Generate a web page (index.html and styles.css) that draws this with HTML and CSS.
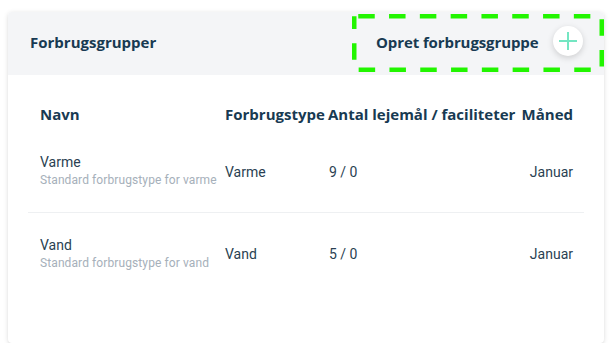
FILE: index.html
```html
<!DOCTYPE html>
<html lang="da">
<head>
<meta charset="utf-8">
<title>Forbrugsgrupper</title>
<link rel="stylesheet" href="styles.css">
</head>
<body>
<div class="card">
  <div class="card-header">
    <h2 class="title">Forbrugsgrupper</h2>
    <button class="create-btn" type="button">
      <span class="create-label">Opret forbrugsgruppe</span>
      <span class="plus-circle">
        <svg width="20" height="20" viewBox="0 0 20 20"><path d="M10 1V19M1 10H19" stroke="#74e6c2" stroke-width="2" fill="none"/></svg>
      </span>
      <svg class="highlight" width="252" height="58" viewBox="0 0 252 58"><rect x="2.25" y="2.25" width="247.5" height="53.5" fill="none" stroke="#22f500" stroke-width="4.5" stroke-dasharray="16.5 14.3" stroke-dashoffset="-4"/></svg>
    </button>
  </div>
  <div class="table">
    <div class="row head">
      <div>Navn</div>
      <div>Forbrugstype</div>
      <div>Antal lejemål / faciliteter</div>
      <div class="right">Måned</div>
    </div>
    <div class="row body divided">
      <div class="name-cell">
        <div class="name">Varme</div>
        <div class="desc">Standard forbrugstype for varme</div>
      </div>
      <div>Varme</div>
      <div class="count">9 / 0</div>
      <div class="right">Januar</div>
    </div>
    <div class="row body">
      <div class="name-cell">
        <div class="name">Vand</div>
        <div class="desc">Standard forbrugstype for vand</div>
      </div>
      <div>Vand</div>
      <div class="count">5 / 0</div>
      <div class="right">Januar</div>
    </div>
  </div>
</div>
</body>
</html>
```

FILE: styles.css
```css
html, body {
  margin: 0;
  padding: 0;
  background: #ffffff;
}

body {
  font-family: Roboto, "Liberation Sans", sans-serif;
  color: #1f3a4f;
}

.card {
  margin: 12px 10px 0 8px;
  width: 596px;
  height: 331px;
  background: #ffffff;
  border-radius: 4px;
  box-shadow: 0 1px 5px rgba(0, 0, 0, 0.13), 0 2px 2px rgba(0, 0, 0, 0.04);
  overflow: hidden;
}

.card-header {
  height: 63px;
  box-sizing: border-box;
  padding: 6px 6px 9px 22px;
  background: #f4f5f7;
  display: flex;
  align-items: center;
  justify-content: space-between;
}

.title {
  margin: 0;
  font-family: "Open Sans", sans-serif;
  font-weight: 700;
  font-size: 15px;
  color: #183a52;
}

.create-btn {
  position: relative;
  height: 48px;
  width: 242px;
  box-sizing: border-box;
  padding: 0 15px 0 20px;
  border: 0;
  background: transparent;
  display: flex;
  align-items: center;
  justify-content: space-between;
  cursor: pointer;
}

.create-label {
  font-family: "Open Sans", sans-serif;
  font-weight: 700;
  font-size: 15px;
  letter-spacing: -0.1px;
  color: #183a52;
}

.plus-circle {
  width: 30px;
  height: 30px;
  border-radius: 50%;
  background: #ffffff;
  box-shadow: 0 2px 6px rgba(0, 0, 0, 0.16);
  display: flex;
  align-items: center;
  justify-content: center;
  margin-top: -2px;
}

.highlight {
  position: absolute;
  left: -4px;
  top: -4px;
  pointer-events: none;
}

.table {
  margin: 22px 20px 0;
}

.row {
  display: grid;
  grid-template-columns: 185px 103px 1fr auto;
  align-items: center;
  padding: 0 11px 0 12px;
}

.row.head {
  height: 34px;
  font-family: "Open Sans", sans-serif;
  font-weight: 700;
  font-size: 15px;
  color: #183a52;
}

.row.body {
  height: 82px;
  box-sizing: border-box;
  font-size: 14px;
  color: #2a3f52;
}

.row.divided {
  border-bottom: 1px solid #eef0f2;
}

.name {
  line-height: 18px;
}

.desc {
  font-size: 12px;
  line-height: 19px;
  letter-spacing: 0.1px;
  color: #a6b0ba;
}

.count {
  padding-left: 1px;
}

.right {
  text-align: right;
}
```
